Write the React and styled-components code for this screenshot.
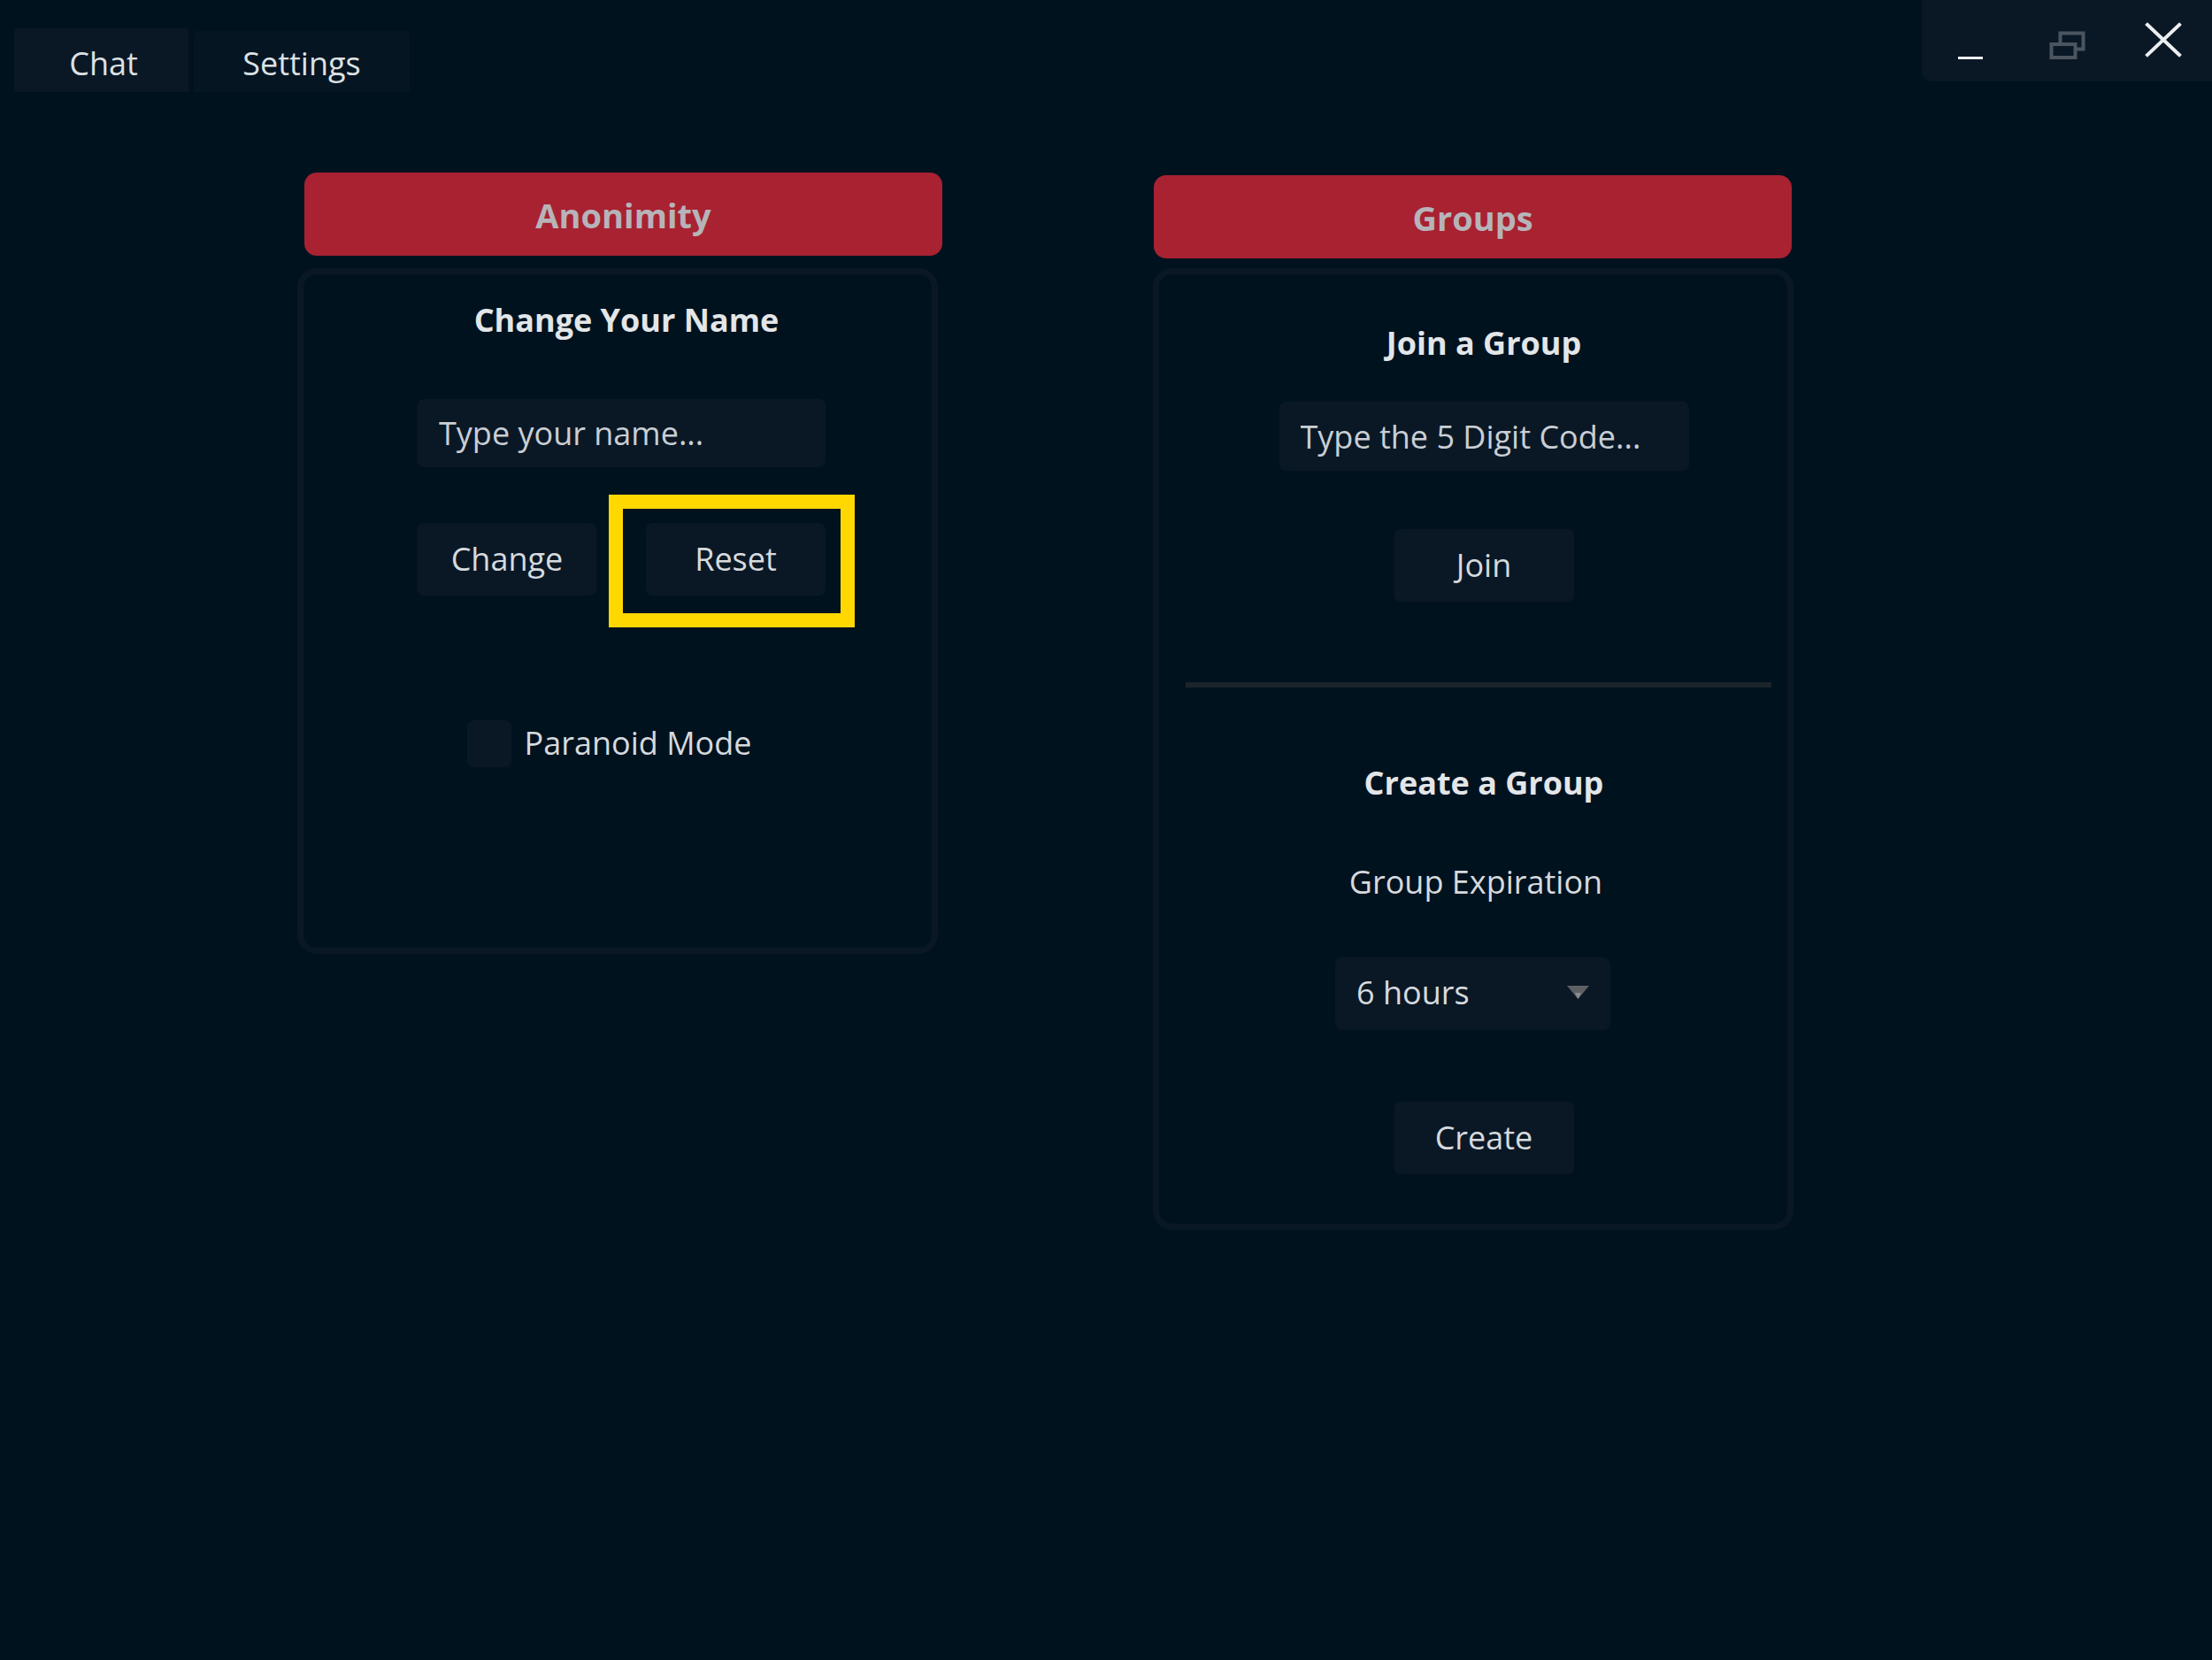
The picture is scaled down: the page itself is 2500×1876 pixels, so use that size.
import * as React from 'react';
import styled, { createGlobalStyle } from 'styled-components';

const GlobalStyle = createGlobalStyle`
  html, body {
    margin: 0;
    padding: 0;
    background: #01121f;
  }
  body {
    min-height: 1876px;
    font-family: "Open Sans", "Noto Sans", sans-serif;
    color: #d6dadd;
  }
`;

const App = () => {
  return (
    <>
      <GlobalStyle />
      <Page>
        <TopBar>
          <Tabs>
            <Tab active>Chat</Tab>
            <Tab>Settings</Tab>
          </Tabs>
          <WindowControls>
            <ControlButton aria-label="minimize">
              <svg width="48" height="48" viewBox="0 0 48 48">
                <rect x="10" y="42" width="28" height="3" fill="#eef0f2" />
              </svg>
            </ControlButton>
            <ControlButton aria-label="restore">
              <svg width="48" height="48" viewBox="0 0 48 48">
                <rect x="16.5" y="15.5" width="26" height="18" fill="none" stroke="#4b5560" strokeWidth="4" />
                <rect x="6.5" y="28" width="27" height="15" fill="#0a1826" stroke="#4b5560" strokeWidth="4" />
              </svg>
            </ControlButton>
            <ControlButton aria-label="close">
              <svg width="48" height="48" viewBox="0 0 48 48">
                <path d="M6 6 L42 40 M42 6 L6 40" stroke="#eceef0" strokeWidth="4" strokeLinecap="square" />
              </svg>
            </ControlButton>
          </WindowControls>
        </TopBar>

        <Columns>
          {/* left column */}
          <Column>
            <Header offsetX={8}>Anonimity</Header>
            <Card height={775} gap={14}>
              <Stack padLeft={9} padTop={27}>
                <Title shift={11}>Change Your Name</Title>
                <Field space={64} width={461} placeholder="Type your name..." />
                <ButtonRow space={63}>
                  <Button width={202}>Change</Button>
                  <Marked>
                    <Button width={203}>Reset</Button>
                    <Highlight />
                  </Marked>
                </ButtonRow>
                <CheckRow space={141}>
                  <CheckBox />
                  <Label>Paranoid Mode</Label>
                </CheckRow>
              </Stack>
            </Card>
          </Column>

          {/* right column */}
          <Column>
            <Header offsetX={1} offsetY={3}>Groups</Header>
            <Card height={1087} gap={11}>
              <Stack padLeft={24} padTop={53}>
                <Title>Join a Group</Title>
                <Field space={41} width={463} tall placeholder="Type the 5 Digit Code..." />
                <Button space={66} width={203}>Join</Button>
                <Divider />
                <Title space={83}>Create a Group</Title>
                <Label as="div" space={63} shift={18}>Group Expiration</Label>
                <Select>
                  <span>6 hours</span>
                  <svg width="25" height="15" viewBox="0 0 25 15">
                    <polygon points="0,0 25,0 12.5,15" fill="#5e6164" />
                    <polygon points="9,8 16,8 12.5,15" fill="#8a8d90" />
                  </svg>
                </Select>
                <Button space={81} width={203}>Create</Button>
              </Stack>
            </Card>
          </Column>
        </Columns>
      </Page>
    </>
  );
};

export default App;

const Page = styled.div`
  display: flex;
  flex-direction: column;
  min-height: 1876px;
`;

const TopBar = styled.div`
  display: flex;
  justify-content: space-between;
  align-items: flex-start;
`;

const Tabs = styled.div`
  display: flex;
  align-items: flex-end;
  gap: 6px;
  padding: 32px 0 0 16px;
`;

const Tab = styled.div`
  display: flex;
  align-items: center;
  justify-content: center;
  width: ${({ active }) => (active ? '197px' : '244px')};
  height: ${({ active }) => (active ? '72px' : '69px')};
  padding: ${({ active }) => (active ? '6px 0 0 5px' : '3px 0 0 0')};
  box-sizing: border-box;
  background: ${({ active }) => (active ? '#0a1826' : '#061522')};
  border-radius: 4px 4px 0 0;
  font-size: 36px;
  color: #dde1e4;
`;

const WindowControls = styled.div`
  display: flex;
  width: 328px;
  height: 92px;
  background: #0a1826;
  border-bottom-left-radius: 12px;
`;

const ControlButton = styled.div`
  flex: 1;
  display: flex;
  align-items: center;
  justify-content: center;
`;

const Columns = styled.main`
  display: flex;
  align-items: flex-start;
  gap: 243px;
  padding: 91px 0 0 336px;
`;

const Column = styled.section`
  display: flex;
  flex-direction: column;
  width: 724px;
`;

const Header = styled.div`
  width: 721px;
  height: 94px;
  margin: ${({ offsetY = 0 }) => offsetY}px 0 0 ${({ offsetX = 0 }) => offsetX}px;
  padding-top: 2px;
  box-sizing: border-box;
  display: flex;
  align-items: center;
  justify-content: center;
  background: #a82232;
  border-radius: 14px;
  font-size: 38px;
  font-weight: 700;
  color: #b6b4b9;
`;

const Card = styled.div`
  box-sizing: border-box;
  height: ${({ height }) => height}px;
  margin-top: ${({ gap }) => gap}px;
  border: 7px solid #0a1826;
  border-radius: 22px;
  background: #01121f;
`;

const Stack = styled.div`
  display: flex;
  flex-direction: column;
  align-items: center;
  padding: ${({ padTop }) => padTop}px 0 0 ${({ padLeft }) => padLeft}px;
`;

const Title = styled.h3`
  margin: ${({ space = 0 }) => space}px 0 0 ${({ shift = 0 }) => shift}px;
  height: 50px;
  line-height: 50px;
  font-size: 36px;
  font-weight: 700;
  color: #e3e6e8;
`;

const Label = styled.span`
  margin: ${({ space = 0 }) => space}px ${({ shift = 0 }) => shift}px 0 0;
  height: 50px;
  line-height: 48px;
  font-size: 36px;
  color: #d6dadd;
`;

const Field = styled.input`
  box-sizing: border-box;
  width: ${({ width }) => width}px;
  height: ${({ tall }) => (tall ? '78px' : '77px')};
  margin-top: ${({ space }) => space}px;
  padding: 0 24px;
  border: none;
  outline: none;
  border-radius: 7px;
  background: #0a1826;
  font-family: "Open Sans", "Noto Sans", sans-serif;
  font-size: 36px;
  color: #d6dadd;
  &::placeholder {
    color: #c9ced3;
  }
`;

const ButtonRow = styled.div`
  display: flex;
  gap: 56px;
  margin-top: ${({ space }) => space}px;
`;

const Button = styled.button`
  box-sizing: border-box;
  width: ${({ width }) => width}px;
  height: 82px;
  margin-top: ${({ space = 0 }) => space}px;
  padding-bottom: 3px;
  border: none;
  border-radius: 7px;
  background: #0a1826;
  font-family: "Open Sans", "Noto Sans", sans-serif;
  font-size: 36px;
  color: #d6dadd;
`;

const Marked = styled.div`
  position: relative;
  display: flex;
`;

const Highlight = styled.div`
  position: absolute;
  top: -32px;
  left: -42px;
  right: -33px;
  bottom: -36px;
  border: 16px solid #ffd800;
  pointer-events: none;
`;

const CheckRow = styled.div`
  display: flex;
  align-items: center;
  gap: 15px;
  margin: ${({ space }) => space}px 28px 0 0;
`;

const CheckBox = styled.div`
  width: 50px;
  height: 53px;
  border-radius: 8px;
  background: #0a1826;
`;

const Divider = styled.hr`
  width: 662px;
  height: 6px;
  margin: 91px 12px 0 0;
  border: none;
  background: #1b232b;
`;

const Select = styled.div`
  box-sizing: border-box;
  display: flex;
  align-items: center;
  justify-content: space-between;
  width: 311px;
  height: 82px;
  margin: 59px 25px 0 0;
  padding: 0 24px 3px;
  border-radius: 8px;
  background: #0a1826;
  font-size: 36px;
  color: #d6dadd;
`;
